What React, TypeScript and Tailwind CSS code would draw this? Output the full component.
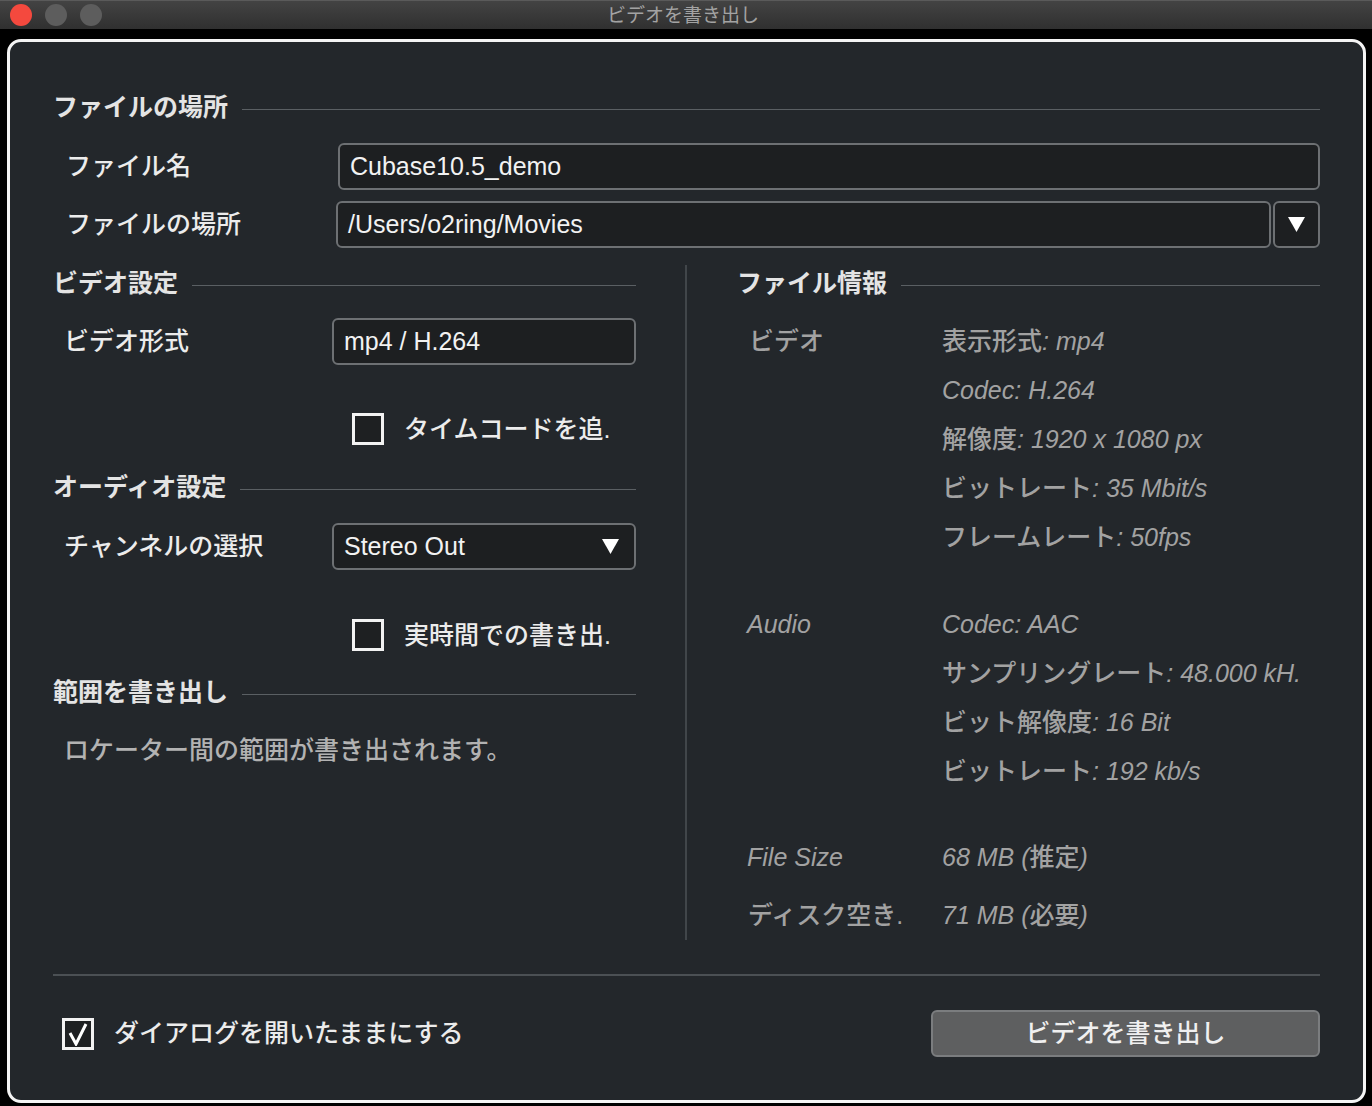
import React from "react";

const FONT = "font-['Liberation_Sans','Noto_Sans_CJK_JP',sans-serif]";

function Heading({ children, className = "" }: { children: React.ReactNode; className?: string }) {
  return (
    <div className={`flex h-[32px] items-center ${className}`}>
      <span className="whitespace-nowrap text-[25px] font-bold leading-none text-[#e4e4e4]">{children}</span>
      <div className="ml-[14px] mt-[4px] h-px flex-1 bg-[#5a5f63]" />
    </div>
  );
}

function Tri() {
  return (
    <svg width="17" height="15" viewBox="0 0 17 15">
      <polygon points="0,0 17,0 8.5,15" fill="#ffffff" />
    </svg>
  );
}

function Checkbox({ checked = false }: { checked?: boolean }) {
  return (
    <div className="flex h-[32px] w-[32px] shrink-0 items-center justify-center border-[3px] border-[#f2f2f2] bg-[#1e2022]">
      {checked && (
        <svg width="22" height="24" viewBox="0 0 22 24">
          <path d="M3 11 L9 22 L19 2" stroke="#ffffff" strokeWidth="3" fill="none" strokeLinejoin="miter" />
        </svg>
      )}
    </div>
  );
}

const inputCls =
  "flex h-full items-center rounded-[6px] border-2 border-[#6d7073] bg-[#1d1f21] px-[10px] text-[25px] font-medium leading-none text-[#f2f2f2]";
const labelCls = "text-[25px] font-medium leading-none text-[#ececec] whitespace-nowrap";
const infoCls = "text-[25px] font-medium leading-none text-[#a2a2a2] whitespace-nowrap";

function I({ children }: { children: React.ReactNode }) {
  return <span className="italic">{children}</span>;
}

function InfoRow({ children }: { children: React.ReactNode }) {
  return <div className={`flex h-[49px] items-center ${infoCls}`}>{children}</div>;
}

export default function App() {
  return (
    <div className={`${FONT} flex h-[1106px] w-[1372px] flex-col bg-black`}>
      {/* title bar */}
      <div className="grid h-[29px] grid-cols-[1fr_auto_1fr] items-center border-t border-[#5a5a5a] bg-gradient-to-b from-[#434343] to-[#303030]">
        <div className="flex items-center gap-[13px] pl-[10px]">
          <span className="h-[22px] w-[22px] rounded-full bg-[#f4493e]" />
          <span className="h-[22px] w-[22px] rounded-full bg-[#5d5d5d]" />
          <span className="h-[22px] w-[22px] rounded-full bg-[#5d5d5d]" />
        </div>
        <div className="pr-[6px] text-[19px] leading-none text-[#a3a3a3]">ビデオを書き出し</div>
        <div />
      </div>
      <div className="h-[10px] shrink-0" />

      {/* panel */}
      <div className="mx-[7px] h-[1064px] w-[1359px] rounded-[14px] border-[3px] border-[#f4f4f4] bg-[#23272b] px-[43px] pt-[49px]">
        <Heading>ファイルの場所</Heading>
        <div className="mt-[20px] flex h-[47px] items-center">
          <div className={`w-[285px] pl-[13px] ${labelCls}`}>ファイル名</div>
          <div className={`${inputCls} flex-1`}>Cubase10.5_demo</div>
        </div>
        <div className="mt-[11px] flex h-[47px] items-center">
          <div className={`w-[283px] pl-[13px] ${labelCls}`}>ファイルの場所</div>
          <div className={`${inputCls} flex-1`}>/Users/o2ring/Movies</div>
          <div className="ml-[2px] flex h-full w-[47px] items-center justify-center rounded-[6px] border-2 border-[#6d7073] bg-[#1d1f21]">
            <Tri />
          </div>
        </div>

        {/* columns */}
        <div className="mt-[17px] flex h-[675px]">
          {/* left */}
          <div className="w-[583px] pt-[2px]">
            <Heading>ビデオ設定</Heading>
            <div className="mt-[19px] flex h-[47px] items-center">
              <div className={`w-[279px] pl-[11px] ${labelCls}`}>ビデオ形式</div>
              <div className={`${inputCls} flex-1`}>mp4 / H.264</div>
            </div>
            <div className="mt-[48px] flex h-[32px] items-center gap-[20px] pl-[299px]">
              <Checkbox />
              <span className={labelCls}>タイムコードを追.</span>
            </div>
            <Heading className="mt-[26px]">オーディオ設定</Heading>
            <div className="mt-[20px] flex h-[47px] items-center">
              <div className={`w-[279px] pl-[11px] ${labelCls}`}>チャンネルの選択</div>
              <div className={`${inputCls} flex-1 justify-between pr-[15px]`}>
                <span>Stereo Out</span>
                <Tri />
              </div>
            </div>
            <div className="mt-[49px] flex h-[32px] items-center gap-[20px] pl-[299px]">
              <Checkbox />
              <span className={labelCls}>実時間での書き出.</span>
            </div>
            <Heading className="mt-[25px]">範囲を書き出し</Heading>
            <div className="mt-[26px] flex h-[32px] items-center pl-[11px] text-[25px] font-medium leading-none text-[#b2b2b2]">
              ロケーター間の範囲が書き出されます。
            </div>
          </div>

          <div className="ml-[49px] w-[2px] bg-[#41464a]" />

          {/* right */}
          <div className="ml-[50px] w-[583px] pt-[2px]">
            <Heading>ファイル情報</Heading>
            <div className="mt-[18px] flex">
              <div className={`flex h-[49px] w-[205px] items-center pl-[12px] ${infoCls}`}>ビデオ</div>
              <div className="flex flex-col">
                <InfoRow>
                  表示形式<I>: mp4</I>
                </InfoRow>
                <InfoRow>
                  <I>Codec: H.264</I>
                </InfoRow>
                <InfoRow>
                  解像度<I>: 1920 x 1080 px</I>
                </InfoRow>
                <InfoRow>
                  ビットレート<I>: 35 Mbit/s</I>
                </InfoRow>
                <InfoRow>
                  フレームレート<I>: 50fps</I>
                </InfoRow>
              </div>
            </div>
            <div className="mt-[38px] flex">
              <div className={`flex h-[49px] w-[205px] items-center pl-[10px] italic ${infoCls}`}>Audio</div>
              <div className="flex flex-col">
                <InfoRow>
                  <I>Codec: AAC</I>
                </InfoRow>
                <InfoRow>
                  サンプリングレート<I>: 48.000 kH.</I>
                </InfoRow>
                <InfoRow>
                  ビット解像度<I>: 16 Bit</I>
                </InfoRow>
                <InfoRow>
                  ビットレート<I>: 192 kb/s</I>
                </InfoRow>
              </div>
            </div>
            <div className="mt-[37px] flex h-[49px] items-center">
              <div className={`w-[205px] pl-[10px] italic ${infoCls}`}>File Size</div>
              <div className={infoCls}>
                <I>68 MB (</I>推定<I>)</I>
              </div>
            </div>
            <div className="mt-[9px] flex h-[49px] items-center">
              <div className={`w-[205px] pl-[11px] ${infoCls}`}>ディスク空き.</div>
              <div className={infoCls}>
                <I>71 MB (</I>必要<I>)</I>
              </div>
            </div>
          </div>
        </div>

        <div className="mt-[34px] h-[2px] bg-[#4b5054]" />

        <div className="mt-[34px] flex h-[47px] items-center justify-between">
          <div className="ml-[9px] flex items-center gap-[20px]">
            <Checkbox checked />
            <span className={labelCls}>ダイアログを開いたままにする</span>
          </div>
          <div className="flex h-full w-[389px] items-center justify-center rounded-[6px] border-2 border-[#7b7d7f] bg-[#5e5f60] text-[25px] font-medium leading-none text-[#f0f0f0]">
            ビデオを書き出し
          </div>
        </div>
      </div>
    </div>
  );
}
